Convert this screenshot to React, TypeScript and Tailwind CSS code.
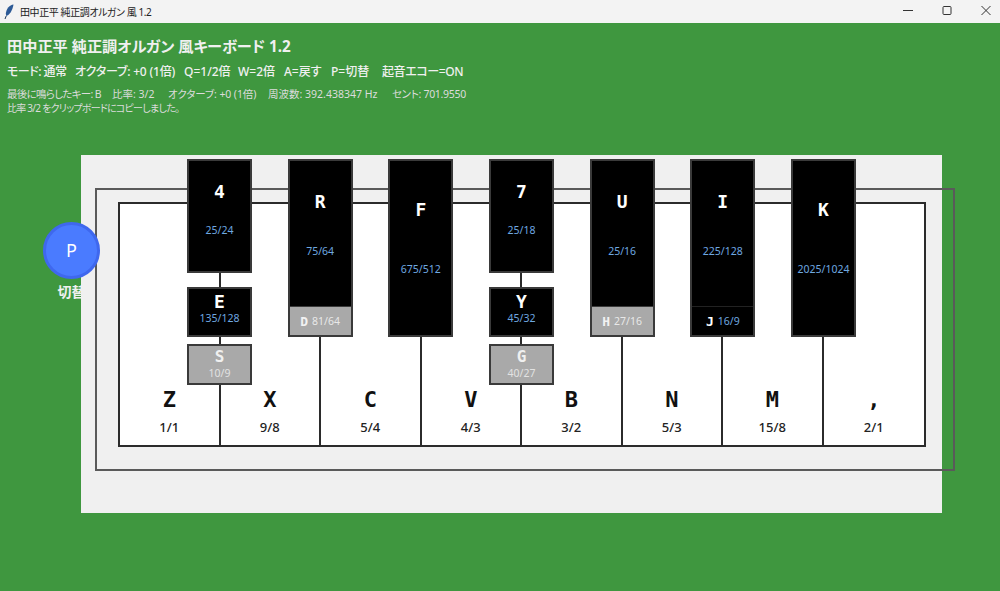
const uiFont = "font-['Noto_Sans','Noto_Sans_CJK_JP',sans-serif] [font-feature-settings:'palt']";
const keyFont = "font-['DejaVu_Sans_Mono','Noto_Sans_CJK_JP',monospace]";
const edge = "border-[#3a3a3a]";

const whiteKeys = [
  { key: "Z", ratio: "1/1" },
  { key: "X", ratio: "9/8" },
  { key: "C", ratio: "5/4" },
  { key: "V", ratio: "4/3" },
  { key: "B", ratio: "3/2" },
  { key: "N", ratio: "5/3" },
  { key: "M", ratio: "15/8" },
  { key: ",", ratio: "2/1" },
];

type Lower = { key: string; ratio: string; grey: boolean };

function KeyLabel({ text, className = "" }: { text: string; className?: string }) {
  return <span className={`${keyFont} font-bold leading-none ${className}`}>{text}</span>;
}

// 4/E/S and 7/Y/G columns: three separate keys, the white key divider shows between them
function TripleKey({ top, mid, low }: { top: string[]; mid: string[]; low: string[] }) {
  return (
    <div className="w-[65px]">
      <div className={`flex h-[114px] flex-col items-center border-2 ${edge} bg-black`}>
        <KeyLabel text={top[0]} className="mt-[22px] text-[18px] text-white" />
        <span className="mt-[24px] text-[10.5px] leading-none text-[#6fa8e0]">{top[1]}</span>
      </div>
      <div className={`mt-[14px] flex h-[50px] flex-col items-center border-2 ${edge} bg-black`}>
        <KeyLabel text={mid[0]} className="mt-[4px] text-[18px] text-white" />
        <span className="mt-[2px] text-[10.5px] leading-none text-[#6fa8e0]">{mid[1]}</span>
      </div>
      <div className={`mt-[7px] flex h-[41px] flex-col items-center border-2 ${edge} bg-[#a9a9a9]`}>
        <KeyLabel text={low[0]} className="mt-[3px] text-[16px] text-[#f0f0f0]" />
        <span className="mt-[3px] text-[10.5px] leading-none text-[#e2e2e2]">{low[1]}</span>
      </div>
    </div>
  );
}

function TallKey({ label, ratio, lower, labelTop, ratioGap }: {
  label: string;
  ratio: string;
  lower?: Lower;
  labelTop: string;
  ratioGap: string;
}) {
  return (
    <div className={`flex h-[178px] w-[65px] flex-col border-2 ${edge} bg-black`}>
      <div className={`flex flex-1 flex-col items-center ${labelTop}`}>
        <KeyLabel text={label} className="text-[18px] text-white" />
        <span className={`text-[10.5px] leading-none text-[#6fa8e0] ${ratioGap}`}>{ratio}</span>
      </div>
      {lower && (
        <div
          className={
            lower.grey
              ? "flex h-[29px] items-center justify-center gap-[4px] border-t border-[#3a3a3a] bg-[#a9a9a9]"
              : "flex h-[29px] items-center justify-center gap-[4px] border-t border-[#222222] bg-black"
          }
        >
          <KeyLabel text={lower.key} className={lower.grey ? "text-[13px] text-[#f2f2f2]" : "text-[13px] text-white"} />
          <span className={lower.grey ? "text-[10.5px] leading-none text-[#e8e8e8]" : "text-[10.5px] leading-none text-[#6fa8e0]"}>
            {lower.ratio}
          </span>
        </div>
      )}
    </div>
  );
}

function Keyboard() {
  return (
    <div className={`relative ml-[81px] mt-[40px] h-[358px] w-[861px] bg-[#f0f0f0] ${uiFont}`}>
      {/* outer frame runs past the panel on the right */}
      <div className="absolute left-[14px] top-[33px] h-[283px] w-[860px] border-2 border-[#5a5a5a]" />

      {/* white keys */}
      <div className="absolute left-[37px] top-[47px] grid h-[245px] w-[808px] grid-cols-8 border-2 border-[#2b2b2b] bg-white">
        {whiteKeys.map((k, i) => (
          <div
            key={k.key}
            className={`flex flex-col items-center justify-end pb-[11px] ${i < 7 ? "border-r-2 border-[#2b2b2b]" : ""}`}
          >
            <KeyLabel text={k.key} className="text-[22px] text-[#111111]" />
            <span className="mt-[10px] text-[13px] font-medium leading-none text-[#222222]">{k.ratio}</span>
          </div>
        ))}
      </div>

      {/* black keys */}
      <div className="absolute left-[106px] top-[4px] flex items-start gap-[35.67px]">
        <TripleKey top={["4", "25/24"]} mid={["E", "135/128"]} low={["S", "10/9"]} />
        <TallKey label="R" ratio="75/64" labelTop="pt-[32px]" ratioGap="mt-[35px]" lower={{ key: "D", ratio: "81/64", grey: true }} />
        <TallKey label="F" ratio="675/512" labelTop="pt-[40px]" ratioGap="mt-[45px]" />
        <TripleKey top={["7", "25/18"]} mid={["Y", "45/32"]} low={["G", "40/27"]} />
        <TallKey label="U" ratio="25/16" labelTop="pt-[32px]" ratioGap="mt-[35px]" lower={{ key: "H", ratio: "27/16", grey: true }} />
        <TallKey label="I" ratio="225/128" labelTop="pt-[32px]" ratioGap="mt-[35px]" lower={{ key: "J", ratio: "16/9", grey: false }} />
        <TallKey label="K" ratio="2025/1024" labelTop="pt-[40px]" ratioGap="mt-[45px]" />
      </div>

      {/* P toggle */}
      <div className="absolute left-[-38px] top-[67px] flex w-[57px] flex-col items-center">
        <div className="flex h-[57px] w-[57px] items-center justify-center rounded-full border-[3px] border-[#3f68ee] bg-[#4a7bff] text-[18px] text-white">
          P
        </div>
        <span className="mt-[6px] whitespace-nowrap text-[14px] font-bold leading-none text-[#f0f0f0]">切替</span>
      </div>
    </div>
  );
}

function TitleBar() {
  return (
    <div className={`flex h-[23px] items-center bg-[#f3f3f3] ${uiFont}`}>
      <svg width="12" height="16" viewBox="0 0 12 16" className="ml-[3px]">
        <path d="M10.5 0.5 C6.5 1 3.5 4.5 2.8 9.5 L3.2 12 C6.5 11 9.5 6.5 10.5 0.5 Z" fill="#2c5a96" />
        <path d="M3.2 12 L2 15" stroke="#1c3556" strokeWidth="1" fill="none" />
      </svg>
      <span className="ml-[5px] text-[10px] leading-none tracking-[-0.4px] text-[#222222]">田中正平 純正調オルガン 風 1.2</span>
      <div className="ml-auto mr-[4px] flex items-center gap-[19px]">
        <svg width="20" height="23" viewBox="0 0 20 23">
          <path d="M5 10.5 H15" stroke="#333333" strokeWidth="1" />
        </svg>
        <svg width="20" height="23" viewBox="0 0 20 23">
          <rect x="6" y="6.5" width="8" height="8" fill="none" stroke="#333333" strokeWidth="1" rx="1" />
        </svg>
        <svg width="20" height="23" viewBox="0 0 20 23">
          <path d="M5.5 6 L14.5 15 M14.5 6 L5.5 15" stroke="#333333" strokeWidth="1" />
        </svg>
      </div>
    </div>
  );
}

function Header() {
  return (
    <div className={`pl-[7px] pt-[13px] text-[#f0f0f0] ${uiFont}`}>
      <div className="text-[15.2px] font-bold leading-[20px]">田中正平 純正調オルガン 風キーボード 1.2</div>
      <div className="mt-[8px] flex whitespace-pre text-[12px] font-medium leading-[16px]">
        <span className="w-[68px] tracking-[-0.5px]">モード: 通常</span>
        <span className="w-[109px] tracking-[-0.2px]">オクターブ: +0 (1倍)</span>
        <span className="w-[54px]">Q=1/2倍</span>
        <span className="w-[46px]">W=2倍</span>
        <span className="w-[47px]">A=戻す</span>
        <span className="w-[51px]">P=切替</span>
        <span className="tracking-[-0.4px]">起音エコー=ON</span>
      </div>
      <div className="mt-[7px] flex whitespace-pre text-[10.5px] leading-[14px] text-[#dcdcdc]">
        <span className="w-[105px] tracking-[-0.7px]">最後に鳴らしたキー: B</span>
        <span className="w-[56px]">比率: 3/2</span>
        <span className="w-[100px] tracking-[-0.1px]">オクターブ: +0 (1倍)</span>
        <span className="w-[124px]">周波数: 392.438347 Hz</span>
        <span className="tracking-[-0.3px]">セント: 701.9550</span>
      </div>
      <div className="whitespace-pre text-[10px] leading-[14px] tracking-[-0.75px] text-[#dcdcdc]">比率 3/2 をクリップボードにコピーしました。</div>
    </div>
  );
}

export default function App() {
  return (
    <div className="h-[591px] w-[1000px] overflow-hidden bg-[#3f973f]">
      <TitleBar />
      <Header />
      <Keyboard />
    </div>
  );
}
